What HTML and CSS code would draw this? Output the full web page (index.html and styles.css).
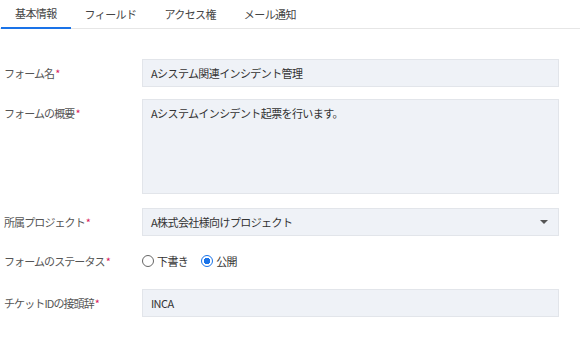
FILE: index.html
```html
<!DOCTYPE html>
<html lang="ja">
<head>
    <meta charset="UTF-8">
    <meta name="viewport" content="width=device-width, initial-scale=1.0">
    <title>フォーム設定</title>
    <link rel="stylesheet" href="styles.css">
</head>
<body>
  <div class="tabs">
    <div class="tab active">基本情報</div>
    <div class="tab">フィールド</div>
    <div class="tab">アクセス権</div>
    <div class="tab">メール通知</div>
  </div>

  <div class="form">
    <div class="form-row row-name">
      <label class="form-label">フォーム名<span class="req">*</span></label>
      <div class="field input">Aシステム関連インシデント管理</div>
    </div>
    <div class="form-row row-desc">
      <label class="form-label top">フォームの概要<span class="req">*</span></label>
      <div class="field textarea">Aシステムインシデント起票を行います。</div>
    </div>
    <div class="form-row row-project">
      <label class="form-label">所属プロジェクト<span class="req">*</span></label>
      <div class="field input select">
        <span>A株式会社様向けプロジェクト</span>
        <span class="caret"></span>
      </div>
    </div>
    <div class="form-row row-status">
      <label class="form-label">フォームのステータス<span class="req">*</span></label>
      <div class="radios">
        <span class="radio"></span><span class="radio-text">下書き</span>
        <span class="radio checked"></span><span class="radio-text">公開</span>
      </div>
    </div>
    <div class="form-row row-prefix">
      <label class="form-label">チケットIDの接頭辞<span class="req">*</span></label>
      <div class="field input">INCA</div>
    </div>
  </div>
</body>
</html>
```

FILE: styles.css
```css
* {
    margin: 0;
    padding: 0;
    box-sizing: border-box;
}

body {
    font-family: "Noto Sans CJK JP", "Noto Sans", sans-serif;
    font-size: 11px;
    letter-spacing: -0.6px;
    color: #333;
    background: #fff;
}

/* Tabs */
.tabs {
    display: flex;
    height: 29px;
    border-bottom: 1px solid #e6e6e6;
}

.tab {
    padding: 0 14px;
    line-height: 28px;
    color: #444;
}

.tab.active {
    margin-left: 1px;
    border-bottom: 2px solid #1a73e8;
    height: 29px;
    line-height: 27px;
}

/* Form */
.form {
    padding: 30px 21px 0 4px;
}

.form-row {
    display: grid;
    grid-template-columns: 138px 1fr;
    align-items: center;
}

.form-label {
    color: #555;
    letter-spacing: -0.9px;
}

.form-label.top {
    align-self: start;
    padding-top: 6px;
}

.req {
    color: #d81b60;
    margin-left: 1px;
}

.field {
    background: #eff2f7;
    border: 1px solid #e2e5ea;
    padding: 0 8px;
    color: #333;
}

.input {
    height: 28px;
    line-height: 26px;
}

.textarea {
    height: 95px;
    padding-top: 5px;
}

.select {
    display: flex;
    justify-content: space-between;
    align-items: center;
}

.caret {
    width: 0;
    height: 0;
    border-left: 4px solid transparent;
    border-right: 4px solid transparent;
    border-top: 4px solid #555;
    margin-right: 2px;
}

.row-desc {
    margin-top: 12px;
}

.row-project {
    margin-top: 14px;
}

.row-status {
    margin-top: 12px;
    height: 26px;
}

.row-prefix {
    margin-top: 15px;
}

.radios {
    display: flex;
    align-items: center;
}

.radio {
    width: 12px;
    height: 12px;
    border: 1px solid #666;
    border-radius: 50%;
    margin-right: 3px;
}

.radio.checked {
    border: 1.5px solid #1a73e8;
    background: radial-gradient(circle, #1a73e8 0 3px, #fff 3.5px);
    margin-left: 13px;
}

.radio-text {
    color: #333;
}
```
